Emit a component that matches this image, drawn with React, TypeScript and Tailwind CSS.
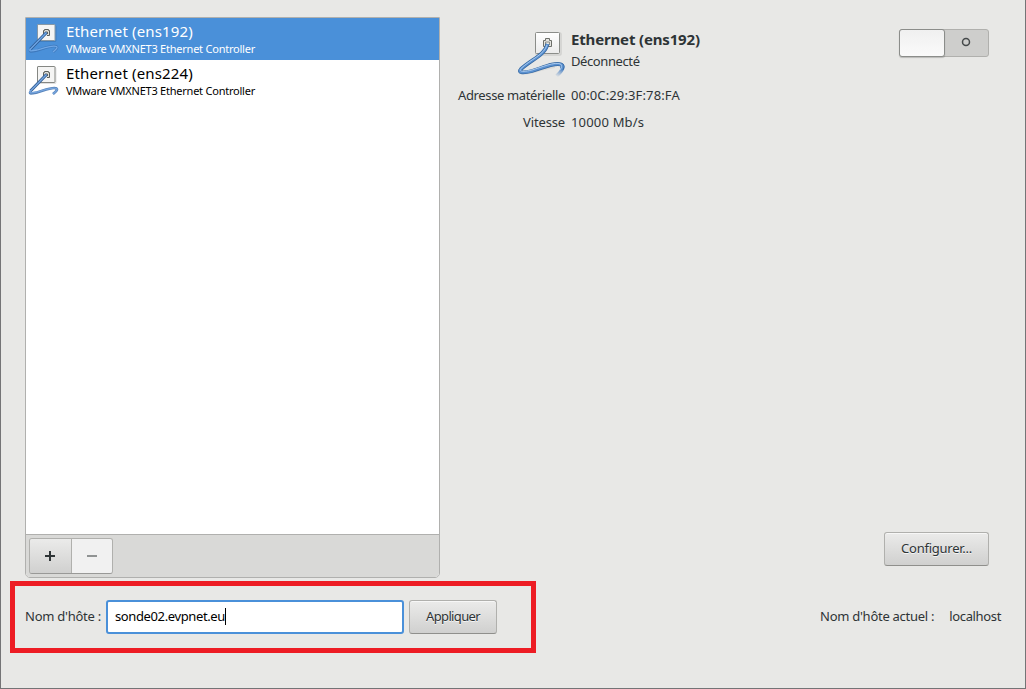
import React from "react";

function LargeCableIcon() {
  return (
    <svg width="50" height="50" viewBox="0 0 50 50" fill="none" className="-mr-0.5 mt-px shrink-0">
      <defs>
        <linearGradient id="plate" x1="0" y1="0" x2="0" y2="1">
          <stop offset="0" stopColor="#ffffff" />
          <stop offset="1" stopColor="#ebebeb" />
        </linearGradient>
        <linearGradient id="tail" gradientUnits="userSpaceOnUse" x1="44" y1="38" x2="40" y2="47">
          <stop offset="0" stopColor="#5185c4" />
          <stop offset="1" stopColor="#5185c4" stopOpacity="0" />
        </linearGradient>
      </defs>
      <rect x="19" y="3" width="25" height="22" rx="1" stroke="#000" strokeOpacity=".1" strokeWidth="1.500" />
      <rect x="18.500" y="2.500" width="24" height="21" rx="1" fill="url(#plate)" stroke="#8b8d89" />
      <path d="M26.500 16.500V10.500H28.500V8.500H32.500V10.500H34.500V16.500Z" fill="#e4e4e0" stroke="#6c6e69" />
      <path d="M28.500 15V12H32.500V15" stroke="#8c8e89" />
      <path d="M8 43.500C15 44 27 38 38 37" stroke="#000" strokeOpacity=".06" strokeWidth="2" />
      <path d="M44 34.500C47.500 36 46 40 39.500 46" stroke="url(#tail)" strokeWidth="3.500" />
      <path d="M30.500 14C28 25 15 29 4 39C0 43 7 43 15 41C25 38 38 32 44 34.500C46 35.500 46 37 44.500 39" stroke="#34669f" strokeWidth="3.800" strokeLinejoin="round" />
      <path d="M30.500 14C28 25 15 29 4 39C0 43 7 43 15 41C25 38 38 32 44 34.500C46 35.500 46 37 44 40" stroke="#5b91d0" strokeWidth="2.500" />
      <path d="M30 15C27 25 14 29 4 38.500C1 42 7 42 15 40C25 37 38 31.500 43.500 34C45 35.500 45 37 43 40" stroke="#a8c8ec" strokeWidth="1" />
    </svg>
  );
}

function SmallCableIcon({ selected = false }: { selected?: boolean }) {
  return (
    <svg width="32" height="32" viewBox="0 0 32 32" fill="none" className="shrink-0">
      <rect x="10" y="2.500" width="18" height="16" rx="1" stroke="#000" strokeOpacity=".12" />
      <rect x="9.500" y="1.500" width="17.500" height="16" rx=".5" fill="#f5f5f4" stroke={selected ? "#8798a5" : "#858783"} />
      <path d="M15.500 12V7.500H16.500V6.500H20.500V7.500H21.500V12.500H19" fill="#dedfdb" stroke="#5d605c" />
      <path d="M17.500 11V9H19.500V11" stroke="#5d605c" />
      <path d="M18.500 9.500L2.500 26" stroke="#305d95" strokeWidth="3.200" />
      <path d="M3 26C0 29.500 4 28.500 9 27.500C16 25.500 25 21.500 28.500 23.500C30 24.500 28 26.500 25 29" stroke={selected ? "#3569a8" : "#4576b3"} strokeWidth="2.600" strokeOpacity={selected ? 0.6 : 0.9} />
      <path d="M18.500 9.500L2.500 26C0 28.500 4 28 9 27C16 25 25 21.500 28.500 23.500C30 24.500 28 26.500 25 29" stroke={selected ? "#6fa7e6" : "#76a5de"} strokeWidth="1.300" />
    </svg>
  );
}

function DeviceRow({ name, selected = false }: { name: string; selected?: boolean }) {
  return (
    <div className={`flex h-[42px] items-start pl-0.5 pt-[5px] ${selected ? "bg-[#4a90d9] text-white" : "text-black"}`}>
      <SmallCableIcon selected={selected} />
      <div className="-mt-px ml-1.5 whitespace-nowrap">
        <div className="h-[18px] text-[15px] leading-[18px] tracking-[0.15px]">{name}</div>
        <div className="mt-px h-4 text-[11px] leading-4 tracking-[-0.23px]">VMware VMXNET3 Ethernet Controller</div>
      </div>
    </div>
  );
}

const buttonClass =
  "h-[34px] shrink-0 rounded-[3px] border border-[#b0b0ad] border-b-[#8f8f8c] bg-linear-to-b from-[#ebebea] to-[#d0d0cf] pb-0.5 text-center leading-[30px] [text-shadow:0_1px_rgba(255,255,255,.75)] shadow-[inset_0_1px_rgba(255,255,255,.6)]";

export default function App() {
  return (
    <div className="relative flex h-[689px] w-[1026px] flex-col overflow-hidden border-x border-b border-[#747476] bg-[#e8e8e6] pt-[17px] font-['Noto_Sans','Open_Sans',sans-serif] text-[13px] text-[#2e3436]">
      <div className="absolute -left-px top-[65px] h-[9px] w-px border-y border-[#252525] bg-[linear-gradient(#747476_2px,#252525_2px,#252525_4px,#747476_4px)]" />
      <main className="flex h-[561px] shrink-0 pl-6">
        <section className="flex w-[415px] shrink-0 flex-col overflow-hidden rounded-b-[5px] border border-[#b0b0ae] bg-white">
          <div className="min-h-0 flex-1">
            <DeviceRow name="Ethernet (ens192)" selected />
            <DeviceRow name="Ethernet (ens224)" />
          </div>
          <div className="flex h-[43px] border-t border-[#b0b0ae] bg-[#d9d9d7] pl-[3px] pt-[3px]">
            <div className="flex h-9 w-[84px] overflow-hidden rounded-[3px] border border-[#b0b0ad] border-b-[#999997]">
              <button className="grid w-[42px] place-items-center border-r border-[#b0b0ad] bg-linear-to-b from-[#ebebea] to-[#d0d0cf]" aria-label="Ajouter">
                <svg width="12" height="12" viewBox="0 0 12 12" className="-ml-px"><path d="M1 6H11M6 1V11" stroke="#2e3436" strokeWidth="2" /></svg>
              </button>
              <button className="grid flex-1 place-items-center bg-[#f1f1f1]" aria-label="Supprimer">
                <svg width="12" height="12" viewBox="0 0 12 12"><path d="M1 6H11" stroke="#909393" strokeWidth="2" /></svg>
              </button>
            </div>
          </div>
        </section>

        <section className="flex flex-1 flex-col justify-between pb-3 pl-[18px] pr-9">
          <div>
            <div className="flex pt-3">
              <div className="flex h-14 w-[107px] justify-end">
                <LargeCableIcon />
              </div>
              <div className="-mt-px ml-1.5 whitespace-nowrap">
                <h1 className="h-[23px] text-[15px] font-bold leading-[22px] tracking-[-0.16px]">Ethernet (ens192)</h1>
                <p className="h-5 leading-5 tracking-[-0.4px]">Déconnecté</p>
              </div>
              <button className="ml-auto flex h-7 w-[90px] rounded-[3px] border border-[#b0b0ad] bg-[#cececc]" aria-label="Activer">
                <span className="-ml-px -mt-px h-7 w-[46px] rounded-[3px] border border-[#8b8d8a] bg-linear-to-b from-[#f0f0f0] to-[#fafafa] shadow-[0_1px_1px_rgba(0,0,0,.2)]" />
                <svg width="10" height="10" viewBox="0 0 10 10" className="ml-4 mt-[7px]"><circle cx="5" cy="5" r="3.500" fill="none" stroke="#45494a" strokeWidth="1.500" /></svg>
              </button>
            </div>
            <div className="grid grid-cols-[107px_auto] gap-x-1.5 gap-y-[7px] whitespace-nowrap leading-5">
              <span className="text-right tracking-[-0.36px]">Adresse matérielle</span>
              <span className="tracking-[0.13px]">00:0C:29:3F:78:FA</span>
              <span className="text-right tracking-[-0.15px]">Vitesse</span>
              <span className="tracking-[0.18px]">10000 Mb/s</span>
            </div>
          </div>
          <button className={`${buttonClass} w-[105px] self-end tracking-[-0.25px]`}>Configurer...</button>
        </section>
      </main>

      <footer className="mt-[3px] flex shrink-0 items-center justify-between pl-[9px] pr-6">
        <div className="flex h-[72px] w-[526px] items-center border-5 border-[#ed1c24] pl-2.5">
          <label className="w-[81px] whitespace-nowrap tracking-[-0.25px]" htmlFor="host">Nom d'hôte :</label>
          <div id="host" className="flex h-[34px] w-[298px] items-center rounded-[3px] border-2 border-[#4a90d9] bg-white pl-[7px] text-black">
            <span className="tracking-[-0.38px]">sonde02.evpnet.eu</span>
            <span className="-mt-px h-[17px] w-px bg-black" />
          </div>
          <button className={`${buttonClass} ml-[5px] w-[88px] tracking-[-0.65px]`}>Appliquer</button>
        </div>
        <div className="flex whitespace-nowrap">
          <span className="mr-[15px] tracking-[-0.27px]">Nom d'hôte actuel :</span>
          <span className="tracking-[-0.35px]">localhost</span>
        </div>
      </footer>
    </div>
  );
}
